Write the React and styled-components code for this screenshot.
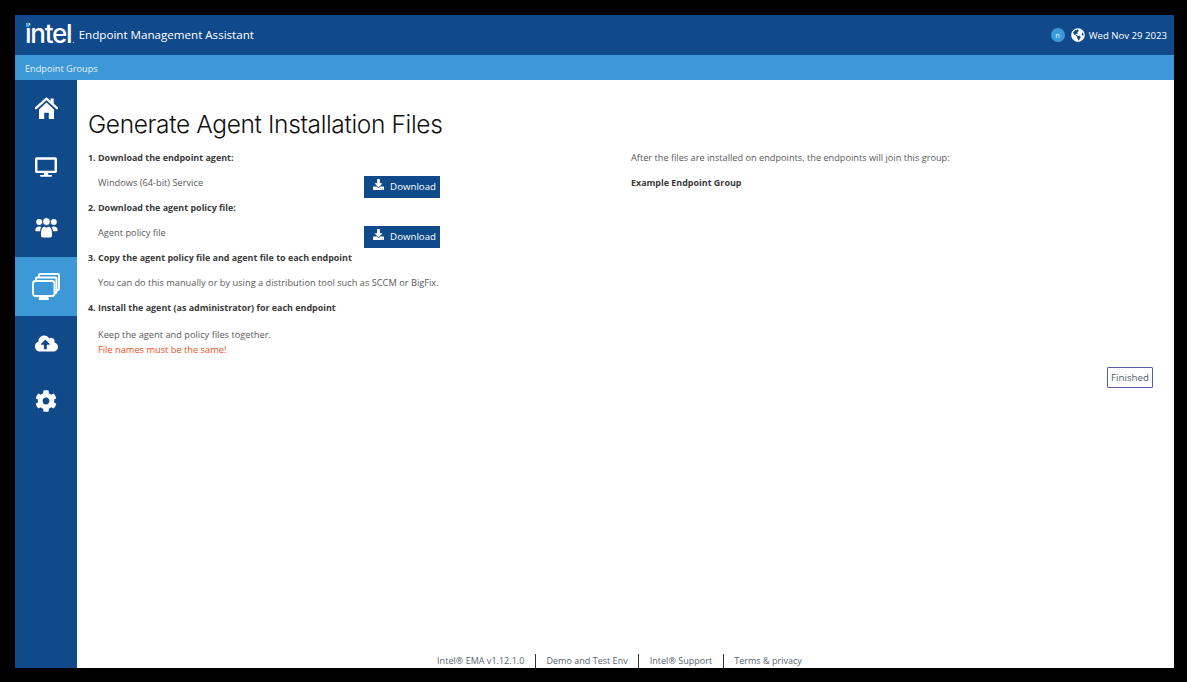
import React from "react";
import styled, { createGlobalStyle } from "styled-components";
import { FaDesktop, FaCloudUploadAlt, FaCog, FaDownload, FaGlobeAmericas } from "react-icons/fa";

const Global = createGlobalStyle`
  html, body { margin: 0; padding: 0; height: 100%; background: #000; }
  #root { height: 100%; }
  * { box-sizing: border-box; }
`;

const Page = styled.div`
  width: 1187px;
  height: 682px;
  padding: 15px 13px 14px 15px;
  background: #000;
  font-family: "Open Sans", "Noto Sans", sans-serif;
  overflow: hidden;
`;
const Frame = styled.div`
  height: 100%;
  display: flex;
  flex-direction: column;
  background: #fff;
`;
const Header = styled.header`
  flex: 0 0 40px;
  height: 40px;
  display: flex;
  align-items: center;
  justify-content: space-between;
  padding: 0 7px 0 10px;
  background: #114a8b;
  color: #fff;
`;
const Brand = styled.div`
  display: flex;
  align-items: center;
  gap: 4px;
`;
const Logo = styled.span`
  position: relative;
  display: block;
  top: -1px;
  font-family: "Inter", sans-serif;
  font-size: 26px;
  font-weight: 500;
  letter-spacing: -1.25px;
  line-height: 30px;
  white-space: nowrap;
`;
const LogoDot = styled.i`
  position: absolute;
  left: 1px;
  top: 4px;
  width: 3px;
  height: 4px;
  background: #2fb5e8;
`;
const LogoMark = styled.span`
  font-size: 8px;
  font-weight: 400;
  letter-spacing: 0;
  margin-left: 1px;
  line-height: 1;
`;
const AppName = styled.span`
  font-size: 11.6px;
  line-height: 30px;
`;
const Status = styled.div`
  display: flex;
  align-items: center;
  font-size: 9.6px;
`;
const Avatar = styled.span`
  width: 14px;
  height: 14px;
  border-radius: 50%;
  background: #3d9ad8;
  color: #dff;
  font-size: 7px;
  display: flex;
  align-items: center;
  justify-content: center;
  margin-right: 6px;
`;
const DateText = styled.span`
  margin-left: 4px;
  font-weight: 500;
`;
const SubBar = styled.nav`
  flex: 0 0 25px;
  display: flex;
  align-items: center;
  padding: 2px 10px 0;
  background: #3c98d6;
  color: #e4f2fb;
  font-size: 9.2px;
`;
const Body = styled.div`
  flex: 1;
  min-height: 0;
  display: flex;
`;
const Sidebar = styled.aside`
  flex: 0 0 62px;
  display: flex;
  flex-direction: column;
  background: #114a8b;
`;
const NavItem = styled.div`
  flex: 0 0 ${p => p.$h}px;
  display: flex;
  align-items: center;
  justify-content: center;
  color: #fff;
  background: ${p => (p.$active ? "#3c98d6" : "transparent")};
`;
const Main = styled.main`
  flex: 1;
  min-width: 0;
  display: flex;
  flex-direction: column;
  padding: 29px 21px 0 11px;
`;
const Title = styled.h1`
  margin: 0 0 6px;
  font-family: "Inter", sans-serif;
  font-size: 24.5px;
  font-weight: 300;
  letter-spacing: -0.36px;
  line-height: 30px;
  color: #111;
`;
const Columns = styled.div`
  display: flex;
`;
const LeftCol = styled.div`
  flex: 0 0 543px;
`;
const RightCol = styled.div`
  flex: 1;
`;
const Steps = styled.div`
  width: 352px;
`;
const Heading = styled.div`
  height: 25px;
  line-height: 25px;
  font-size: 8.95px;
  font-weight: 700;
  color: #3a3a3a;
  white-space: nowrap;
`;
const Line = styled.div`
  display: flex;
  justify-content: space-between;
  align-items: flex-start;
  height: 25px;
  padding-left: 10px;
  line-height: 25px;
  font-size: 9.25px;
  color: #5a5a5a;
  white-space: nowrap;
`;
const Note = styled.div`
  padding-left: 10px;
  line-height: 15px;
  font-size: 9.25px;
  margin-top: ${p => p.$top || 0}px;
  color: ${p => (p.$warn ? "#ea4f22" : "#5a5a5a")};
  white-space: nowrap;
`;
const RightText = styled.div`
  height: 25px;
  line-height: 25px;
  font-size: ${p => (p.$bold ? 8.95 : 9.2)}px;
  font-weight: ${p => (p.$bold ? 700 : 400)};
  color: ${p => (p.$bold ? "#3a3a3a" : "#5a5a5a")};
`;
const DownloadButton = styled.button`
  width: 76px;
  height: 21.5px;
  margin-top: 6px;
  padding: 0 4px 0 0;
  display: flex;
  align-items: center;
  justify-content: flex-end;
  gap: 6px;
  border: 0;
  background: #114a8b;
  color: #fff;
  font-family: inherit;
  font-size: 9.7px;
  svg { position: relative; top: -2px; }
`;
const Actions = styled.div`
  display: flex;
  justify-content: flex-end;
  margin-top: 10px;
`;
const FinishedButton = styled.button`
  width: 46px;
  height: 21px;
  padding: 0;
  border: 1px solid #4f5f9f;
  border-radius: 1px;
  background: #fff;
  color: #4a5a70;
  font-family: inherit;
  font-size: 9.7px;
`;
const Footer = styled.footer`
  margin-top: auto;
  display: flex;
  justify-content: center;
  padding-right: 2px;
  height: 14px;
`;
const FooterLink = styled.span`
  padding: 0 10.5px;
  font-size: 9.05px;
  line-height: 14px;
  color: #5b6470;
  white-space: nowrap;
  border-left: ${p => (p.$first ? "none" : "1px solid #333")};
`;

const HomeIcon = () => (
  <svg width="23" height="23" viewBox="0 0 23 23" fill="#fff">
    <path d="M15.5 1.5h3.2v5.5l-3.2-2.7z" />
    <path d="M1 11.2 11.5 1.6 22 11.2" fill="none" stroke="#fff" strokeWidth="2.3" strokeLinecap="round" strokeLinejoin="round" />
    <path fillRule="evenodd" d="M11.5 5.6 19 12.4V22h-5.2v-6.2H9.2V22H4v-9.6z" />
  </svg>
);

const GroupIcon = () => (
  <svg width="23" height="21" viewBox="0 0 23 21" fill="#fff">
    <circle cx="4.2" cy="5" r="3" />
    <circle cx="18.8" cy="5" r="3" />
    <circle cx="11.5" cy="4.6" r="3.9" stroke="#114a8b" strokeWidth=".8" />
    <path d="M.3 13.6c0-2.8 1.6-4.1 4-4.1 1 0 1.7.2 2.3.6-1 1.100-1.500 2.400-1.500 4.100H1.200c-.6 0-.9-.2-.9-.6z" />
    <path d="M22.700 13.600c0-2.800-1.600-4.100-4-4.100-1 0-1.700.2-2.300.6 1 1.100 1.500 2.400 1.500 4.100h3.900c.6 0 .9-.2.9-.6z" />
    <path d="M6 15.500c0-3.800 2-5.700 3.500-5.700.7.500 1.200.7 2 .7s1.300-.2 2-.7c1.500 0 3.500 1.900 3.500 5.700v3.300c0 1.200-.8 1.700-1.800 1.700H7.800c-1 0-1.800-.5-1.800-1.700z" />
  </svg>
);

const StackedDisplays = () => (
  <svg width="28" height="27" viewBox="0 0 28 27" fill="none" stroke="#fff" strokeWidth="1.9" strokeLinejoin="round">
    <path d="M7 4V2a1 1 0 0 1 1-1h18a1 1 0 0 1 1 1v14a1 1 0 0 1-1 1h-1" />
    <path d="M4 7V5.500a1 1 0 0 1 1-1h18.500a1 1 0 0 1 1 1V19a1 1 0 0 1-1 1H23" />
    <rect x="1" y="8" width="21.500" height="15" rx="2.500" />
    <path d="M8.500 23.500h6.500l1 2.500H7.500z" fill="#fff" />
  </svg>
);

export default function App() {
  return (
    <>
      <Global />
      <Page>
        <Frame>
          <Header>
            <Brand>
              <Logo>
                intel
                <LogoMark>.</LogoMark>
                <LogoDot />
              </Logo>
              <AppName>Endpoint Management Assistant</AppName>
            </Brand>
            <Status>
              <Avatar>n</Avatar>
              <FaGlobeAmericas size={14} />
              <DateText>Wed Nov 29 2023</DateText>
            </Status>
          </Header>
          <SubBar>Endpoint Groups</SubBar>
          <Body>
            <Sidebar>
              <NavItem $h={57}><HomeIcon /></NavItem>
              <NavItem $h={60}><FaDesktop size={22} /></NavItem>
              <NavItem $h={60}><GroupIcon /></NavItem>
              <NavItem $h={59} $active><StackedDisplays /></NavItem>
              <NavItem $h={54}><FaCloudUploadAlt size={23} /></NavItem>
              <NavItem $h={62}><FaCog size={22} /></NavItem>
            </Sidebar>
            <Main>
              <Title>Generate Agent Installation Files</Title>
              <Columns>
                <LeftCol>
                  <Steps>
                    <Heading>1. Download the endpoint agent:</Heading>
                    <Line>
                      Windows (64-bit) Service
                      <DownloadButton><FaDownload size={11} />Download</DownloadButton>
                    </Line>
                    <Heading>2. Download the agent policy file:</Heading>
                    <Line>
                      Agent policy file
                      <DownloadButton><FaDownload size={11} />Download</DownloadButton>
                    </Line>
                    <Heading>3. Copy the agent policy file and agent file to each endpoint</Heading>
                    <Line>You can do this manually or by using a distribution tool such as SCCM or BigFix.</Line>
                    <Heading>4. Install the agent (as administrator) for each endpoint</Heading>
                    <Note $top={7}>Keep the agent and policy files together.</Note>
                    <Note $warn>File names must be the same!</Note>
                  </Steps>
                </LeftCol>
                <RightCol>
                  <RightText>After the files are installed on endpoints, the endpoints will join this group:</RightText>
                  <RightText $bold>Example Endpoint Group</RightText>
                </RightCol>
              </Columns>
              <Actions>
                <FinishedButton>Finished</FinishedButton>
              </Actions>
              <Footer>
                <FooterLink $first>Intel® EMA v1.12.1.0</FooterLink>
                <FooterLink>Demo and Test Env</FooterLink>
                <FooterLink>Intel® Support</FooterLink>
                <FooterLink>Terms &amp; privacy</FooterLink>
              </Footer>
            </Main>
          </Body>
        </Frame>
      </Page>
    </>
  );
}
